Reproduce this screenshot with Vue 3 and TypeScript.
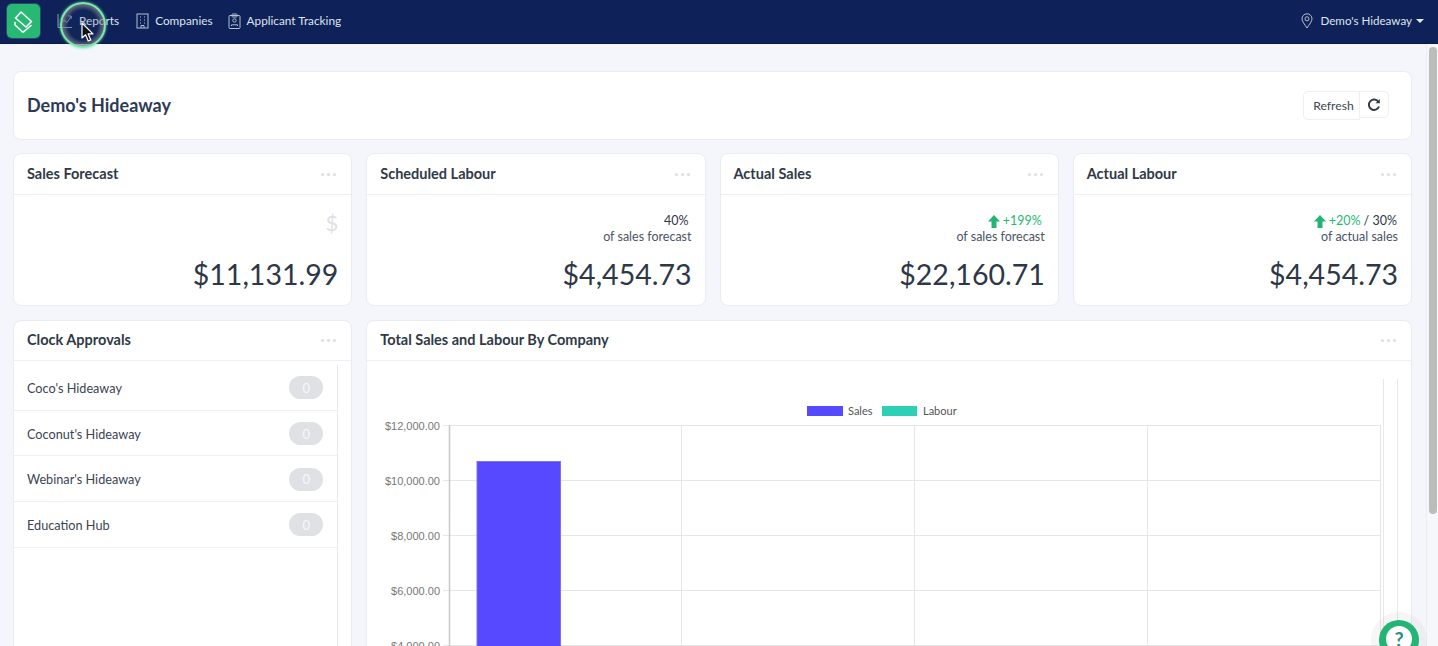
<script setup lang="ts">
interface Nav { label: string; icon: string }
interface Stat { title: string; pct?: string; extra?: string; plain?: string; sub?: string; value: string; dollar?: boolean }

const navs: Nav[] = [
  { label: 'Reports', icon: 'chart' },
  { label: 'Companies', icon: 'building' },
  { label: 'Applicant Tracking', icon: 'clip' },
]
const stats: Stat[] = [
  { title: 'Sales Forecast', value: '$11,131.99', dollar: true },
  { title: 'Scheduled Labour', plain: '40%', sub: 'of sales forecast', value: '$4,454.73' },
  { title: 'Actual Sales', pct: '+199%', sub: 'of sales forecast', value: '$22,160.71' },
  { title: 'Actual Labour', pct: '+20%', extra: ' / 30%', sub: 'of actual sales', value: '$4,454.73' },
]
const clocks: string[] = ["Coco's Hideaway", "Coconut's Hideaway", "Webinar's Hideaway", 'Education Hub']
const yTicks = [
  { y: 425.5, label: '$12,000.00' },
  { y: 480.5, label: '$10,000.00' },
  { y: 535.5, label: '$8,000.00' },
  { y: 590.5, label: '$6,000.00' },
  { y: 645.5, label: '$4,000.00' },
]
const xLines: number[] = [681.5, 914.5, 1147.5, 1380.5]
</script>

<template>
  <div class="app">
    <header class="nav">
      <div class="logo">
        <svg width="33" height="34" viewBox="0 0 33 34" fill="none" stroke="#fff" stroke-width="1.600" stroke-linejoin="round" stroke-linecap="round">
          <path d="M14 8 L24.500 17.500 L19 23 L8.500 14 Z" />
          <path d="M8 18.500 L8 21 L15 27.500 Q16 28.200 17 27.500 L24 21.500" />
        </svg>
      </div>
      <nav class="links">
        <a v-for="n in navs" :key="n.label" class="link">
          <svg v-if="n.icon === 'chart'" width="16" height="16" viewBox="0 0 16 16" fill="none" stroke="#8d99b5" stroke-width="1">
            <path d="M1 1v13.500h14" /><path d="M3 12 7 7l3 2.500 4-6" /><path d="M11 3h3.200v3" />
          </svg>
          <svg v-else-if="n.icon === 'building'" width="13" height="16" viewBox="0 0 13 16" fill="none" stroke="#b6bfd3" stroke-width="1">
            <rect x="1" y="1" width="11" height="14" /><path d="M4 4h1M8 4h1M4 7h1M8 7h1M4 10h1M8 10h1M5 15v-2.500h3V15" />
          </svg>
          <svg v-else width="13" height="16" viewBox="0 0 13 16" fill="none" stroke="#b6bfd3" stroke-width="1">
            <rect x="1" y="2.500" width="11" height="13" rx="1" /><rect x="4" y="1" width="5" height="3" rx=".7" /><circle cx="6.500" cy="7.500" r="1.700" /><path d="M3.500 13v-1.200h6V13" />
          </svg>
          <span>{{ n.label }}</span>
        </a>
      </nav>
      <div class="loc">
        <svg width="12" height="16" viewBox="0 0 12 16" fill="none" stroke="#b6bfd3" stroke-width="1">
          <path d="M6 15C3.500 11 1 8.500 1 5.800a5 5 0 0 1 10 0C11 8.500 8.500 11 6 15Z" /><circle cx="6" cy="5.800" r="2" />
        </svg>
        <span>Demo's Hideaway</span>
        <i class="caret"></i>
      </div>
    </header>

    <main class="main">
      <section class="card head">
        <h1>Demo's Hideaway</h1>
        <div class="refresh">
          <button class="rbtn">Refresh</button>
          <button class="ricon">
            <svg width="14" height="14" viewBox="0 0 14 14" fill="none" stroke="#2f3a4a" stroke-width="2">
              <path d="M11.500 4A5.200 5.200 0 1 0 12 8.500" /><path d="M12.800 1v4.200H8.600" fill="#2f3a4a" stroke="none" />
            </svg>
          </button>
        </div>
      </section>

      <section class="stats">
        <article v-for="s in stats" :key="s.title" class="card stat">
          <div class="chead">
            <h2>{{ s.title }}</h2>
            <span class="dots"><i></i><i></i><i></i></span>
          </div>
          <div class="sbody">
            <div v-if="s.dollar" class="dollar">$</div>
            <div v-else class="meta">
              <div class="mline">
                <template v-if="s.pct">
                  <svg class="up" width="12" height="13" viewBox="0 0 12 13"><path d="M6 0 12 6.500H8.500V13h-5V6.500H0Z" fill="#22b573" /></svg>
                  <span class="pct">{{ s.pct }}</span><span v-if="s.extra" class="extra">{{ s.extra }}</span><span v-else class="pad"></span>
                </template>
                <span v-else class="plain">{{ s.plain }}</span>
              </div>
              <div class="sub">{{ s.sub }}</div>
            </div>
            <div class="val">{{ s.value }}</div>
          </div>
        </article>
      </section>

      <section class="lower">
        <article class="card clock">
          <div class="chead">
            <h2>Clock Approvals</h2>
            <span class="dots"><i></i><i></i><i></i></span>
          </div>
          <ul class="list">
            <li v-for="c in clocks" :key="c">
              <span>{{ c }}</span>
              <b class="pill">0</b>
            </li>
          </ul>
        </article>

        <article class="card chart">
          <div class="chead">
            <h2>Total Sales and Labour By Company</h2>
            <span class="dots"><i></i><i></i><i></i></span>
          </div>
          <svg class="plot" width="1045" height="300" viewBox="367 362 1045 300">
            <line x1="1383.500" x2="1383.500" y1="379" y2="661" stroke="#e8e8e8" />
            <line x1="1397.500" x2="1397.500" y1="379" y2="661" stroke="#e8e8e8" />
            <rect x="807" y="406" width="36" height="10" fill="#5749ff" />
            <text x="848" y="415" class="leg">Sales</text>
            <rect x="882" y="406" width="35" height="10" fill="#2bd0b5" />
            <text x="923" y="415" class="leg">Labour</text>
            <g v-for="t in yTicks" :key="t.y">
              <line x1="443" x2="1380" :y1="t.y" :y2="t.y" stroke="#e6e6e6" />
              <text x="440" :y="t.y + 4" text-anchor="end" class="tick">{{ t.label }}</text>
            </g>
            <line v-for="x in xLines" :key="x" :x1="x" :x2="x" y1="425" y2="661" stroke="#e6e6e6" />
            <line x1="449.500" x2="449.500" y1="425" y2="661" stroke="#c8c8c8" stroke-width="1.500" />
            <rect x="477" y="461.500" width="83.500" height="200" fill="#5749ff" stroke="#7d74e0" />
          </svg>
        </article>
      </section>
    </main>

    <div class="scroll"><div class="thumb"></div></div>

    <div class="help"><span class="qm">?</span></div>

    <div class="ring"></div>
    <svg class="cursor" width="14" height="21" viewBox="0 0 14 21">
      <path d="M1 1v15l3.600-3.200 2.600 6.200 2.600-1.100-2.600-6H12Z" fill="#111" stroke="#fff" stroke-width="1.200" stroke-linejoin="round" />
    </svg>
  </div>
</template>

<style scoped>
.app {
  position: relative;
  height: 646px;
  overflow: hidden;
  display: flex;
  flex-direction: column;
  background: #f4f6fb;
  font-family: Lato, "Liberation Sans", sans-serif;
  color: #2d3748;
}
.nav {
  flex: 0 0 44px;
  box-sizing: border-box;
  height: 44px;
  background: #0e2158;
  display: flex;
  align-items: center;
  padding: 0 14px 2px 7px;
  border-bottom: 1px solid #0a1a48;
}
.logo {
  width: 33px;
  height: 34px;
  border-radius: 5px;
  background: #27b973;
  box-shadow: 0 0 0 1px #2d4a6c;
}
.logo svg { display: block; }
.links { display: flex; margin-left: 17px; gap: 17px; }
.link {
  display: flex;
  align-items: center;
  gap: 6px;
  color: #dfe4ef;
  font-size: 11.800px;
}
.link:last-child { margin-left: -2px; }
.loc {
  margin-left: auto;
  display: flex;
  align-items: center;
  gap: 7px;
  color: #dfe4ef;
  font-size: 11.600px;
}
.caret {
  width: 0;
  height: 0;
  border-left: 4px solid transparent;
  border-right: 4px solid transparent;
  border-top: 4px solid #e6eaf3;
  margin-left: -3px;
}
.main {
  padding: 27px 26px 0 13px;
  display: flex;
  flex-direction: column;
  gap: 14px;
}
.card {
  background: #fff;
  border: 1px solid #eaecf1;
  border-radius: 8px;
  box-sizing: border-box;
}
.head {
  height: 69px;
  margin-bottom: -1px;
  display: flex;
  align-items: center;
  justify-content: space-between;
  padding: 0 22px 0 13px;
}
h1 { margin: 0 0 2px; font-size: 18px; font-weight: 700; color: #2c3a56; }
.refresh { display: flex; align-items: flex-start; }
.rbtn, .ricon {
  background: #fff;
  border: 1px solid #edeff3;
  font-family: inherit;
  color: #3c4654;
  padding: 0;
}
.rbtn {
  width: 57px;
  height: 29px;
  font-size: 12.200px;
  padding-left: 4px;
  border-radius: 5px 0 0 5px;
}
.ricon {
  width: 30px;
  height: 27px;
  margin-left: -1px;
  border-radius: 0 5px 5px 0;
  display: flex;
  align-items: center;
  justify-content: center;
}
.stats {
  display: grid;
  grid-template-columns: repeat(4, 1fr);
  gap: 14px;
}
.stat { height: 153px; }
.chead {
  height: 41px;
  box-sizing: border-box;
  border-bottom: 1px solid #eef0f3;
  display: flex;
  align-items: center;
  justify-content: space-between;
  padding: 0 15px 1px 13px;
}
h2 { margin: 0; font-size: 14.500px; font-weight: 700; color: #2f3a46; }
.dots { display: flex; gap: 3px; margin-top: 2px; }
.dots i { width: 3px; height: 3px; border-radius: 50%; background: #dcdee2; }
.sbody {
  height: 111px;
  box-sizing: border-box;
  padding: 18px 13px 0;
  text-align: right;
  display: flex;
  flex-direction: column;
}
.dollar { font-size: 22px; line-height: 20px; color: #dfe1e5; height: 32px; }
.meta { height: 32px; font-size: 12.500px; line-height: 16px; }
.mline { display: flex; justify-content: flex-end; align-items: center; height: 16px; }
.up { margin-right: 3px; }
.pct { color: #27b973; }
.pad { width: 3px; }
.extra { color: #2d3748; white-space: pre; margin-right: 1px; }
.plain { margin-right: 3px; color: #2d3748; }
.sub { color: #4b5563; }
.val {
  margin-top: 10px;
  font-size: 28.500px;
  line-height: 38px;
  color: #2d3748;
}
.lower {
  display: grid;
  grid-template-columns: calc((100% - 42px) / 4) 1fr;
  gap: 14px;
}
.clock, .chart { height: 360px; overflow: hidden; }
.clock .chead, .chart .chead { height: 40px; padding-bottom: 2px; }
.chart .plot { margin-top: 1px; }
.list {
  list-style: none;
  margin: 4px 13px 0 0;
  padding: 0;
  height: 320px;
  border-right: 1px solid #e8e9ec;
}
.list li {
  height: 45.700px;
  box-sizing: border-box;
  border-bottom: 1px solid #eef0f3;
  display: flex;
  align-items: center;
  justify-content: space-between;
  padding: 1px 14px 0 13px;
  font-size: 12.700px;
  color: #3a4452;
}
.pill {
  width: 34px;
  height: 23px;
  border-radius: 12px;
  background: #dfe1e5;
  color: #f8f8f9;
  font-size: 13px;
  font-weight: 400;
  display: flex;
  align-items: center;
  justify-content: center;
}
.plot { display: block; }
.leg { font-family: Lato, sans-serif; font-size: 11px; fill: #555; }
.tick { font-family: "Liberation Sans", Arial, sans-serif; font-size: 11px; fill: #777; }
.scroll {
  position: absolute;
  top: 44px;
  right: 0;
  bottom: 0;
  width: 12px;
  background: #f6f7fa;
  border-left: 1px solid #eceef2;
  box-sizing: border-box;
}
.thumb {
  position: absolute;
  top: 3px;
  left: 2px;
  width: 8px;
  height: 467px;
  border-radius: 4px;
  background: #bcbcbc;
}
.help {
  position: absolute;
  left: 1379px;
  top: 620px;
  width: 40px;
  height: 40px;
  border-radius: 50%;
  background: #22b573;
  box-shadow: 0 0 0 8px rgba(180, 180, 180, 0.12);
  display: flex;
  justify-content: center;
  padding-top: 6px;
  box-sizing: border-box;
}
.qm {
  width: 26px;
  height: 26px;
  border-radius: 50%;
  background: #fff;
  color: #2b8f7c;
  font-size: 20px;
  font-weight: 700;
  line-height: 26px;
  text-align: center;
}
.ring {
  position: absolute;
  left: 60px;
  top: 2px;
  width: 46px;
  height: 46px;
  box-sizing: border-box;
  border-radius: 50%;
  border: 2.500px solid #7fe8a8;
  background: radial-gradient(circle, rgba(40, 60, 110, 0.15) 50%, rgba(125, 135, 140, 0.95) 75%);
  box-shadow: 0 0 3px #5fe39a;
}
.cursor { position: absolute; left: 81px; top: 22px; }
</style>

<style>
html, body { margin: 0; overflow: hidden; }
</style>
